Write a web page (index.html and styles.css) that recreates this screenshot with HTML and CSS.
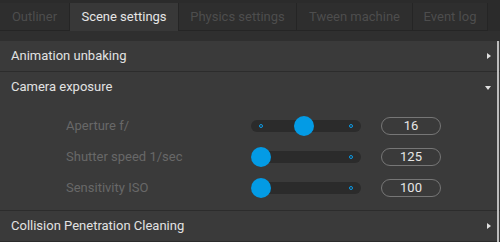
FILE: index.html
```html
<!DOCTYPE html>
<html lang="en">
<head>
  <meta charset="UTF-8" />
  <title>Scene settings</title>
  <link rel="stylesheet" href="styles.css">
</head>
<body>
  <div class="tabs">
    <div class="tab" style="width:70px">Outliner</div>
    <div class="tab active" style="width:109px">Scene settings</div>
    <div class="tab" style="width:118px">Physics settings</div>
    <div class="tab" style="width:116px">Tween machine</div>
    <div class="tab" style="width:75px">Event log</div>
  </div>
  <div class="gap"></div>
  <div class="panel">
    <div class="section">
      <div class="header">Animation unbaking <span class="arrow right"></span></div>
    </div>
    <div class="section">
      <div class="header">Camera exposure <span class="arrow down"></span></div>
      <div class="rows">
        <div class="row">
          <span class="label">Aperture f/</span>
          <div class="slider">
            <span class="dot left"></span>
            <span class="dot right"></span>
            <span class="knob" style="left:43px"></span>
          </div>
          <div class="value">16</div>
        </div>
        <div class="row">
          <span class="label">Shutter speed 1/sec</span>
          <div class="slider">
            <span class="dot right"></span>
            <span class="knob" style="left:0px"></span>
          </div>
          <div class="value">125</div>
        </div>
        <div class="row">
          <span class="label">Sensitivity ISO</span>
          <div class="slider">
            <span class="dot right"></span>
            <span class="knob" style="left:0px"></span>
          </div>
          <div class="value">100</div>
        </div>
      </div>
    </div>
    <div class="section">
      <div class="header">Collision Penetration Cleaning <span class="arrow right"></span></div>
    </div>
    <div class="scrollbar"></div>
  </div>
</body>
</html>
```

FILE: styles.css
```css
body {
  margin: 0;
  background: #2b2b2b;
  font-family: Roboto, "Liberation Sans", sans-serif;
  font-size: 13px;
  overflow: hidden;
}

.tabs {
  display: flex;
  margin-top: 3px;
  height: 28px;
}

.tab {
  box-sizing: border-box;
  height: 28px;
  line-height: 28px;
  text-align: center;
  background: #2e2e2e;
  color: #4d4d4d;
  border-right: 1px solid #252525;
  border-bottom: 1px solid #252525;
  font-size: 13px;
}

.tab.active {
  background: #383838;
  color: #e6e6e6;
  border-bottom: 0;
}

.gap {
  height: 10px;
  background: #2f2f2f;
}

.panel {
  position: relative;
  background: #3a3a3a;
  height: 201px;
}

.section {
  border-bottom: 1px solid #2c2c2c;
}

.header {
  position: relative;
  height: 30px;
  line-height: 30px;
  padding-left: 11px;
  color: #e2e2e2;
}

.arrow {
  position: absolute;
  right: 9px;
  width: 0;
  height: 0;
}

.arrow.right {
  top: 12px;
  border-top: 3px solid transparent;
  border-bottom: 3px solid transparent;
  border-left: 4px solid #e0e0e0;
}

.arrow.down {
  top: 14px;
  border-left: 3px solid transparent;
  border-right: 3px solid transparent;
  border-top: 4px solid #e0e0e0;
}

.rows {
  padding: 8px 0 7px;
}

.row {
  display: flex;
  align-items: center;
  height: 31px;
}

.label {
  width: 185px;
  padding-left: 66px;
  color: #686868;
}

.slider {
  position: relative;
  width: 110px;
  height: 12px;
  border-radius: 6px;
  background: #2b2b2b;
}

.dot {
  position: absolute;
  top: 4px;
  width: 2px;
  height: 2px;
  border: 1px solid #0a9be8;
  border-radius: 50%;
}

.dot.left { left: 8px; }
.dot.right { right: 8px; }

.knob {
  position: absolute;
  top: -4px;
  width: 20px;
  height: 20px;
  border-radius: 50%;
  background: #039be5;
}

.value {
  margin-left: 20px;
  box-sizing: border-box;
  width: 60px;
  height: 18px;
  line-height: 16px;
  border: 1px solid #767676;
  border-radius: 9px;
  text-align: center;
  color: #e6e6e6;
}

.scrollbar {
  position: absolute;
  right: 1px;
  top: 0;
  width: 2px;
  height: 100%;
  background: #bdbdbd;
}
```
